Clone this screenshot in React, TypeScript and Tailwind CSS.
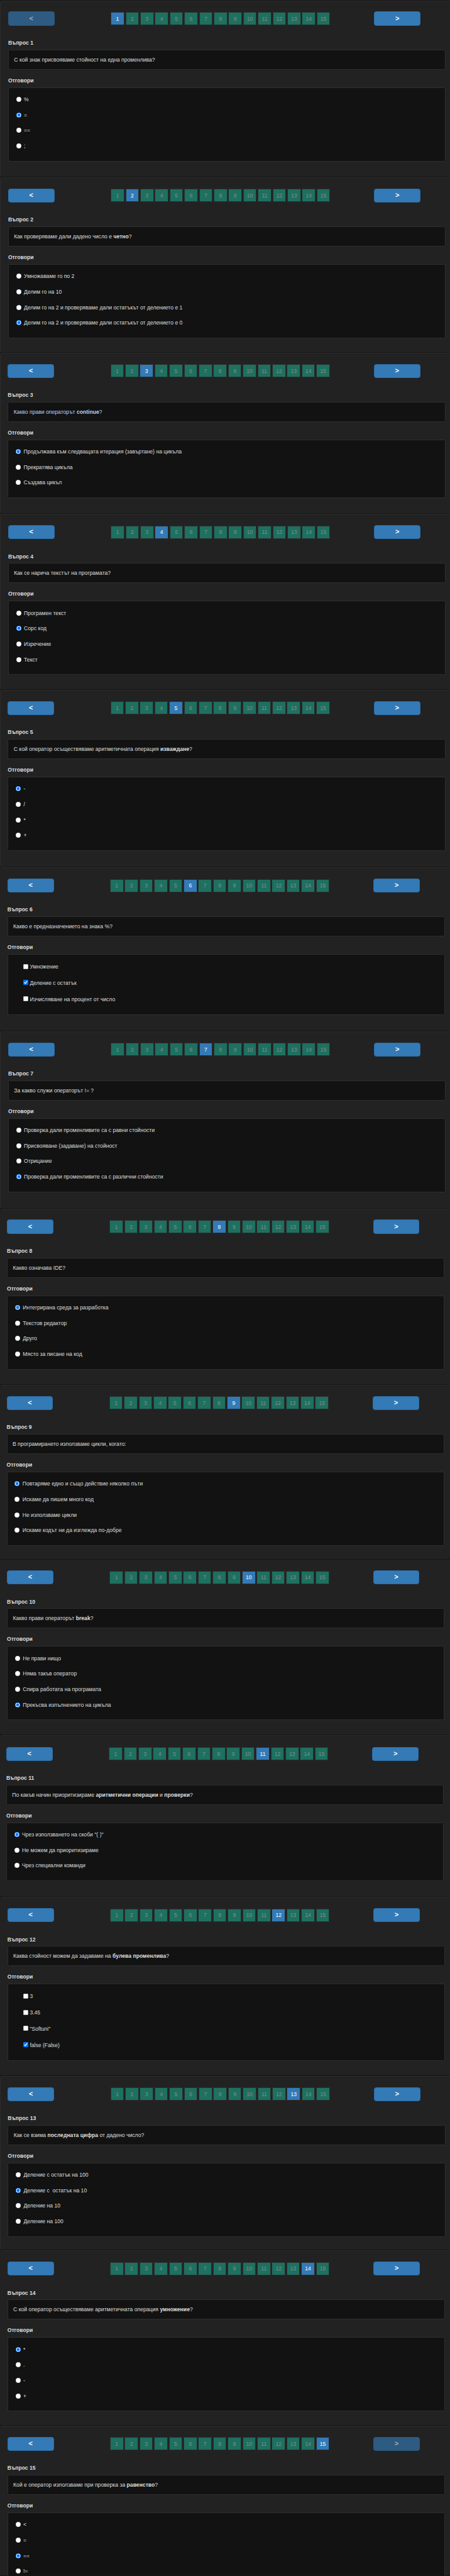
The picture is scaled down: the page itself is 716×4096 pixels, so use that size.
import React from "react";

type Question = {
  frame: string;
  kind: "radio" | "checkbox";
  text: React.ReactNode;
  tint?: string;
  answers: string[];
  picked: number;
};

const QUESTIONS: Question[] = [
  {
    frame: "h-[281.2px] pt-[17.9px] pl-[11.9px] border-l-[#2b2b2b]",
    kind: "radio",
    text: "С кой знак присвояваме стойност на една променлива?",
    answers: ["%", "=", "==", ";"],
    picked: 1,
  },
  {
    frame: "h-[279.2px] pt-[17.9px] pl-[11.9px] border-l-[#2b2b2b]",
    kind: "radio",
    text: (
      <>
        Как проверяваме дали дадено число е <b>четно</b>?
      </>
    ),
    answers: [
      "Умножаваме го по 2",
      "Делим го на 10",
      "Делим го на 2 и проверяваме дали остатъкът от делението е 1",
      "Делим го на 2 и проверяваме дали остатъкът от делението е 0",
    ],
    picked: 3,
  },
  {
    frame: "h-[256.2px] pt-[17.7px] pl-[11.3px] border-l-[#2b2b2b] border-b-[#2b2b2b]",
    kind: "radio",
    tint: "text-[#b4d0fb]",
    text: (
      <>
        Какво прави операторът <b>continue</b>?
      </>
    ),
    answers: ["Продължава към следващата итерация (завъртане) на цикъла", "Прекратява цикъла", "Създава цикъл"],
    picked: 0,
  },
  {
    frame: "h-[280.1px] pt-[17.9px] pl-[11.9px] border-l-[#2b2b2b] border-b-[#222]",
    kind: "radio",
    text: "Как се нарича текстът на програмата?",
    answers: ["Програмен текст", "Сорс код", "Изречение", "Текст"],
    picked: 1,
  },
  {
    frame: "h-[282px] pt-[17.6px] pl-[11.3px] border-l-[#2b2b2b]",
    kind: "radio",
    text: (
      <>
        С кой оператор осъществяваме аритметичната операция <b>изваждане</b>?
      </>
    ),
    answers: ["-", "/", "*", "+"],
    picked: 0,
  },
  {
    frame: "h-[260.7px] pt-[17.7px] pl-[10.7px] border-l-[#222]",
    kind: "checkbox",
    text: "Какво е предназначението на знака %?",
    answers: ["Умножение", "Деление с остатък", "Изчисляване на процент от число"],
    picked: 1,
  },
  {
    frame: "h-[281.6px] pt-[17.7px] pl-[11.9px] border-l-[#2b2b2b]",
    kind: "radio",
    text: "За какво служи операторът != ?",
    answers: [
      "Проверка дали променливите са с равни стойности",
      "Присвояване (задаване) на стойност",
      "Отрицание",
      "Проверка дали променливите са с различни стойности",
    ],
    picked: 3,
  },
  {
    frame: "h-[280.8px] pt-[17.9px] pl-[10.1px] border-l-[#222] border-b-[#222]",
    kind: "radio",
    text: "Какво означава IDE?",
    answers: ["Интегрирана среда за разработка", "Текстов редактор", "Друго", "Място за писане на код"],
    picked: 0,
  },
  {
    frame: "h-[277.9px] pt-[17.4px] pl-[9.5px] border-l-[#222] border-b-[#222]",
    kind: "radio",
    text: "В програмирането използваме цикли, когато:",
    answers: [
      "Повтаряме едно и също действие няколко пъти",
      "Искаме да пишем много код",
      "Не използваме цикли",
      "Искаме кодът ни да изглежда по-добре",
    ],
    picked: 0,
  },
  {
    frame: "h-[278.9px] pt-[16.9px] pl-[10.1px] border-l-[#222] border-t-[#242424]",
    kind: "radio",
    text: (
      <>
        Какво прави операторът <b>break</b>?
      </>
    ),
    answers: ["Не прави нищо", "Няма такъв оператор", "Спира работата на програмата", "Прекъсва изпълнението на цикъла"],
    picked: 3,
  },
  {
    frame: "h-[257.2px] pt-[18.5px] pl-[8.9px] border-l-[#222]",
    kind: "radio",
    text: (
      <>
        По какъв начин приоритизираме <b>аритметични операции</b> и <b>проверки</b>?
      </>
    ),
    answers: ['Чрез използването на скоби "( )"', "Не можем да приоритизираме", "Чрез специални команди"],
    picked: 0,
  },
  {
    frame: "h-[285.2px] pt-[17.8px] pl-[10.7px] border-l-[#222] border-b-[#222]",
    kind: "checkbox",
    text: (
      <>
        Каква стойност можем да задаваме на <b>булева променлива</b>?
      </>
    ),
    answers: ["3", "3.45", '"Softuni"', "false (False)"],
    picked: 3,
  },
  {
    frame: "h-[277px] pt-[17.1px] pl-[11.3px] border-l-[#2b2b2b] border-b-[#222]",
    kind: "radio",
    text: (
      <>
        Как се взима <b>последната цифра</b> от дадено число?
      </>
    ),
    answers: ["Деление с остатък на 100", "Деление с\u00a0 остатък на 10", "Деление на 10", "Деление на 100"],
    picked: 1,
  },
  {
    frame: "h-[278.5px] pt-[17.6px] pl-[10.7px] border-l-[#222]",
    kind: "radio",
    text: (
      <>
        С кой оператор осъществяваме аритметичната операция <b>умножение</b>?
      </>
    ),
    answers: ["*", ".", "-", "+"],
    picked: 0,
  },
  {
    frame: "h-[238.9px] pt-[17.7px] pl-[10.7px] border-l-[#222]",
    kind: "radio",
    text: (
      <>
        Кой е оператор използваме при проверка за <b>равенство</b>?
      </>
    ),
    answers: ["<", "=", "==", "!="],
    picked: 2,
  },
];

function StepButton({ label, disabled }: { label: string; disabled: boolean }) {
  return (
    <button
      disabled={disabled}
      className={
        "flex h-[22.2px] w-[73.9px] shrink-0 items-center justify-center rounded-[3.7px] border pb-[1px] text-[11px] font-bold leading-none " +
        (disabled ? "border-[#2b5780] bg-[#2d5b82] text-[#a9adb1]" : "border-[#2f6da5] bg-[#337ab7] text-white")
      }
    >
      {label}
    </button>
  );
}

function Pager({ current }: { current: number }) {
  return (
    <nav className="flex h-[22.2px] items-center">
      <StepButton label="<" disabled={current === 1} />
      <ol className="ml-[89.4px] flex gap-[1.85px]">
        {QUESTIONS.map((_, i) => (
          <li
            key={i}
            className={
              "flex h-[21px] w-[21.565px] items-center justify-center border border-[#2b2e2d] " +
              (i + 1 === current ? "bg-[#337ab7] text-white" : "bg-[#1e7060] text-[#888c88]")
            }
          >
            {i + 1}
          </li>
        ))}
      </ol>
      <div className="ml-[69.9px]">
        <StepButton label=">" disabled={current === QUESTIONS.length} />
      </div>
    </nav>
  );
}

function RadioMark({ on }: { on: boolean }) {
  return (
    <svg viewBox="0 0 13 13" className="size-[8px] shrink-0">
      <circle cx="6.5" cy="6.5" r="6.5" fill={on ? "#0075ff" : "#8a8a8a"} />
      <circle cx="6.5" cy="6.5" r={on ? 5.4 : 6} fill="#fff" />
      {on && <circle cx="6.5" cy="6.5" r="4" fill="#0075ff" />}
    </svg>
  );
}

function CheckMark({ on }: { on: boolean }) {
  return (
    <svg viewBox="0 0 13 13" className="size-[8px] shrink-0">
      <rect width="13" height="13" rx="2" fill={on ? "#0075ff" : "#767676"} />
      {!on && <rect x="0.8" y="0.8" width="11.4" height="11.4" rx="1.4" fill="#fff" />}
      {on && <path d="M2.8 6.8 5.2 9.4 10.2 3" fill="none" stroke="#fff" strokeWidth="2" />}
    </svg>
  );
}

function QuestionBlock({ q, n }: { q: Question; n: number }) {
  const radio = q.kind === "radio";
  return (
    <section
      className={
        "overflow-hidden rounded-l-[2px] border-y border-l border-t-[#2d2d2d] border-b-[#151515] bg-[#222] " + q.frame
      }
    >
      <div className="-mt-px w-[696.4px]">
        <Pager current={n} />
        <h2 className="mt-[21.3px] h-[12px] font-bold leading-[12px]">Въпрос {n}</h2>
        <div
          className={
            "mt-[4.9px] flex h-[31.9px] items-center rounded-[2.5px] border border-[#2e2e2e] bg-[#121212] pl-[8.4px] " +
            (q.tint ?? "")
          }
        >
          <p>{q.text}</p>
        </div>
        <h2 className="mt-[10.9px] h-[12px] font-bold leading-[12px]">Отговори</h2>
        <ul
          className={
            "mt-[5.2px] rounded-[2.5px] border border-[#2e2e2e] bg-[#121212] " +
            (radio ? "pt-[5.9px] pb-[11.4px] pl-[11.9px]" : "pt-[5.3px] pb-[12px] pl-[24.3px]")
          }
        >
          {q.answers.map((a, i) => (
            <li
              key={a}
              className={"flex items-center " + (radio ? "h-[24.65px] gap-[4.3px]" : "h-[25.85px] gap-[2.4px]")}
            >
              {radio ? <RadioMark on={i === q.picked} /> : <CheckMark on={i === q.picked} />}
              <span className={radio ? "" : "pt-[1.6px]"}>{a}</span>
            </li>
          ))}
        </ul>
      </div>
    </section>
  );
}

export default function App() {
  return (
    <main className="h-[4096px] w-[716px] overflow-hidden bg-[#121212] pt-[0.6px] font-['Liberation_Sans',Arial,sans-serif] text-[8.63px] leading-[12px] text-[#dedede]">
      {QUESTIONS.map((q, i) => (
        <QuestionBlock key={i} q={q} n={i + 1} />
      ))}
    </main>
  );
}
